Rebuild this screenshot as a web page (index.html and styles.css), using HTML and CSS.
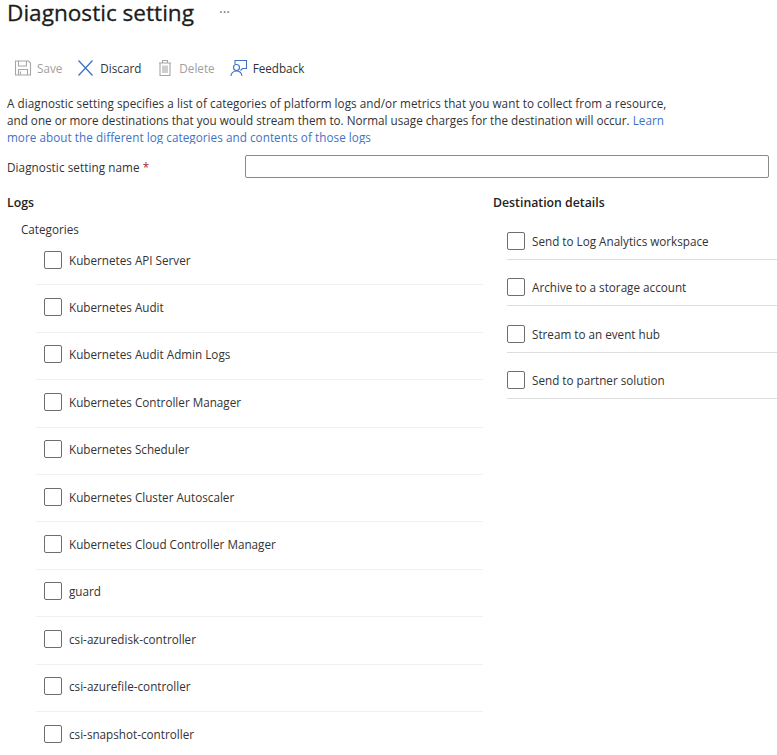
FILE: index.html
```html
<!DOCTYPE html>
<html lang="en">
<head>
  <meta charset="UTF-8" />
  <title>Diagnostic setting</title>
  <link rel="stylesheet" href="styles.css">
</head>
<body>
  <div class="title-row">
    <h1>Diagnostic setting</h1>
    <span class="more">···</span>
  </div>

  <div class="toolbar">
    <div class="tool disabled">
      <svg width="18" height="18" viewBox="0 0 18 18" fill="none" stroke="#a6a6a6" stroke-width="1.1"><path d="M1.500 2h13l2 2v12h-15z"/><path d="M4.500 2v5h8V2"/><path d="M4.500 16v-5.500h9V16"/><path d="M6.500 12.500v3"/></svg>
      <span>Save</span>
    </div>
    <div class="tool">
      <svg width="18" height="18" viewBox="0 0 18 18" fill="none" stroke="#3f72c4" stroke-width="1.3"><path d="M1.500 1.500l14 15M15.500 1.500l-14 15"/></svg>
      <span>Discard</span>
    </div>
    <div class="tool disabled">
      <svg width="18" height="18" viewBox="-1 0 18 18" fill="none" stroke="#a6a6a6" stroke-width="1.1"><path d="M2 4h12M5.500 4V1.500h5V4M3 4v12.500h10V4"/><path d="M6 6.500v7.500M8 6.500v7.500M10 6.500v7.500"/></svg>
      <span>Delete</span>
    </div>
    <div class="tool">
      <svg width="18" height="18" viewBox="0 0 18 18" fill="none" stroke="#3f72c4" stroke-width="1.1"><path d="M5 5V1.500h11.500v8h-4l-2 2"/><circle cx="6.500" cy="8.500" r="3"/><path d="M1 17c0-3 2.500-5 5.500-5s5 2 5.500 5"/></svg>
      <span>Feedback</span>
    </div>
  </div>

  <p class="intro">A diagnostic setting specifies a list of categories of platform logs and/or metrics that you want to collect from a resource, and one or more destinations that you would stream them to. Normal usage charges for the destination will occur. <a href="#">Learn more about the different log categories and contents of those logs</a></p>

  <div class="name-row">
    <label for="setting-name">Diagnostic setting name <span class="req">*</span></label>
    <input type="text" id="setting-name">
  </div>

  <div class="columns">
    <section class="logs">
      <h2>Logs</h2>
      <div class="categories">Categories</div>
      <ul class="check-list">
        <li><span class="box"></span>Kubernetes API Server</li>
        <li><span class="box"></span>Kubernetes Audit</li>
        <li><span class="box"></span>Kubernetes Audit Admin Logs</li>
        <li><span class="box"></span>Kubernetes Controller Manager</li>
        <li><span class="box"></span>Kubernetes Scheduler</li>
        <li><span class="box"></span>Kubernetes Cluster Autoscaler</li>
        <li><span class="box"></span>Kubernetes Cloud Controller Manager</li>
        <li><span class="box"></span>guard</li>
        <li><span class="box"></span>csi-azuredisk-controller</li>
        <li><span class="box"></span>csi-azurefile-controller</li>
        <li><span class="box"></span>csi-snapshot-controller</li>
      </ul>
    </section>
    <section class="destinations">
      <h2>Destination details</h2>
      <ul class="dest-list">
        <li><span class="box"></span>Send to Log Analytics workspace</li>
        <li><span class="box"></span>Archive to a storage account</li>
        <li><span class="box"></span>Stream to an event hub</li>
        <li><span class="box"></span>Send to partner solution</li>
      </ul>
    </section>
  </div>
</body>
</html>
```

FILE: styles.css
```css
html, body {
  height: 755px;
  overflow: hidden;
}

body {
  margin: 0;
  padding: 0 0 0 7px;
  font-family: "Open Sans", sans-serif;
  font-size: 11.7px;
  color: #333;
  background: white;
}

.title-row {
  display: flex;
  align-items: flex-start;
  height: 50px;
}

h1 {
  margin: 0;
  font-size: 22.6px;
  font-weight: 400;
  line-height: 26px;
  color: #1c1c1c;
  -webkit-text-stroke: 0.3px #1c1c1c;
}

.more {
  margin-left: 25px;
  line-height: 24px;
  color: #777;
  font-size: 14px;
}

.toolbar {
  display: flex;
  align-items: center;
  gap: 15px;
  height: 36px;
  padding-left: 7px;
}

.tool {
  display: flex;
  align-items: center;
  gap: 5px;
}

.tool.disabled {
  color: #a0a0a0;
}

.intro {
  margin: 0;
  margin-top: 9px;
  width: 664px;
  height: 49px;
  overflow: hidden;
  line-height: 17px;
}

.intro::first-line {
  letter-spacing: 0.05px;
}

a {
  color: #3f72c4;
  text-decoration: none;
  letter-spacing: 0.05px;
}

.name-row {
  display: flex;
  align-items: center;
  margin-top: 10px;
  height: 24px;
}

.name-row label {
  width: 238px;
  padding-top: 2px;
  letter-spacing: 0.08px;
}

.req {
  color: #a4262c;
}

.name-row input {
  width: 524px;
  height: 23px;
  box-sizing: border-box;
  margin: 0;
  border: 1px solid #8a8a8a;
  border-radius: 2px;
}

.columns {
  display: flex;
  margin-top: 15px;
}

h2 {
  margin: 0;
  font-size: 12.3px;
  font-weight: 600;
  line-height: 20px;
  color: #222;
}

.logs {
  width: 476px;
  flex: none;
}

.destinations {
  margin-left: 10px;
  flex: 1;
}

.categories {
  margin-top: 6px;
  padding-left: 14px;
  line-height: 20px;
}

ul {
  list-style: none;
  margin: 0;
  padding: 0;
}

li {
  display: flex;
  align-items: center;
  box-sizing: border-box;
}

.box {
  width: 18px;
  height: 18px;
  box-sizing: border-box;
  border: 1.5px solid #6e6e6e;
  border-radius: 2px;
  margin-right: 7px;
  flex: none;
}

.check-list {
  margin-top: -1px;
  margin-left: 29px;
}

.check-list li {
  height: 47.4px;
  padding-left: 8px;
  padding-bottom: 3px;
  border-bottom: 1px solid #f1f1f1;
}

.check-list li:last-child {
  border-bottom: none;
}

.dest-list {
  margin-left: 14px;
  margin-top: 0;
}

.dest-list li {
  height: 46.6px;
  padding-top: 9.6px;
  border-bottom: 1px solid #dedede;
}
```
